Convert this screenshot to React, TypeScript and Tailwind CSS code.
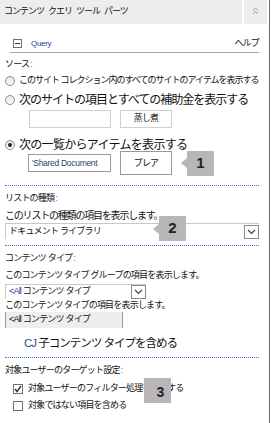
const FONT = "font-['Liberation_Sans','Noto_Sans_CJK_JP',sans-serif]";

const Radio = ({ checked = false }: { checked?: boolean }) => (
  <span className="w-[10px] h-[10px] rounded-full border border-[#8c8c8c] bg-gradient-to-b from-[#e6e6e6] to-white flex items-center justify-center shrink-0">
    {checked && <span className="w-[4px] h-[4px] rounded-full bg-[#222]" />}
  </span>
);

const Check = ({ checked = false }: { checked?: boolean }) => (
  <span className="w-[10px] h-[10px] border border-[#707070] bg-white flex items-center justify-center shrink-0">
    {checked && (
      <svg width="8" height="8" viewBox="0 0 8 8">
        <path d="M1 4 L3 6.5 L7 1" stroke="#333" strokeWidth="1.4" fill="none" />
      </svg>
    )}
  </span>
);

const Badge = ({ n, arrow = true }: { n: string; arrow?: boolean }) => (
  <div className="flex items-center">
    {arrow && (
      <div className="w-0 h-0 border-y-[5px] border-y-transparent border-r-[6px] border-r-[#b8b6b7]" />
    )}
    <div className="w-[27px] h-[25px] bg-[#b8b6b7] flex items-center justify-center text-[15px] font-bold text-[#222]">
      {n}
    </div>
  </div>
);

const Chevron = () => (
  <span className="w-[15px] h-[14px] border border-[#8a8a8a] bg-white flex items-center justify-center shrink-0">
    <svg width="9" height="6" viewBox="0 0 9 6">
      <path d="M1 1 L4.5 4.5 L8 1" stroke="#444" strokeWidth="1.2" fill="none" />
    </svg>
  </span>
);

const Dotted = ({ top = 6 }: { top?: number }) => (
  <div className={`border-t border-dotted border-[#3b73d6] mb-[6px] ${top === 10 ? "mt-[10px]" : "mt-[6px]"}`} />
);

const Colon = () => <span className="text-[#2f7fd0] ml-[1px]">:</span>;

export default function App() {
  return (
    <div className={`w-[272px] h-[423px] bg-white overflow-hidden text-[#111] ${FONT}`}>
      <div className="w-[270px] h-full border-r border-[#6f6f6f]">
        <div className="flex h-[24px]">
          <div className="flex-1 bg-[#ededed] flex items-center gap-[4px] pl-[4px] text-[9px] tracking-[-1px]">
            <span>コンテンツ</span>
            <span>クエリ</span>
            <span>ツール</span>
            <span>パーツ</span>
          </div>
          <div className="w-[23px] ml-[2px] mr-[2px] bg-[#ededed] flex justify-center pt-[7px]">
            <svg width="7" height="8" viewBox="0 0 7 8">
              <path d="M1 3.5 L3.5 1 L6 3.5 M1 7 L3.5 4.5 L6 7" stroke="#9a9a9a" strokeWidth="1" fill="none" />
            </svg>
          </div>
        </div>

        <div className="mx-[10px] mt-[11px] h-[18px] flex items-center border-b border-[#a6a6a6]">
          <span className="ml-[3px] w-[9px] h-[9px] border border-[#6f6f6f] flex items-center justify-center">
            <span className="w-[5px] h-px bg-[#333]" />
          </span>
          <span className="ml-[9px] text-[8px] text-[#1f3f8f] tracking-[-0.3px]">Query</span>
          <span className="ml-auto text-[9px] tracking-[-0.8px]">ヘルプ</span>
        </div>

        <div className="pl-[5px] pr-[10px]">
          <div className="mt-[5px] text-[9px] tracking-[-0.8px] h-[12px] leading-[12px]">
            ソース<Colon />
          </div>
          <div className="mt-[5px] flex items-center gap-[4px] h-[12px]">
            <Radio />
            <span className="text-[9px] tracking-[-1px] whitespace-nowrap">
              このサイト コレクション内のすべてのサイトのアイテムを表示する
            </span>
          </div>
          <div className="mt-[5px] flex items-center gap-[4px] h-[16px]">
            <Radio />
            <span className="text-[12px] tracking-[-1px] whitespace-nowrap">
              次のサイトの項目とすべての補助金を表示する
            </span>
          </div>
          <div className="mt-[2px] flex items-start gap-[9px] pl-[24px] h-[18px]">
            <div className="w-[82px] h-[18px] border border-[#cfcfcf] bg-white" />
            <div className="w-[52px] h-[18px] border border-[#cfcfcf] bg-white flex items-center justify-center text-[9px] tracking-[-0.8px]">
              蒸し煮
            </div>
          </div>
          <div className="mt-[9px] flex items-center gap-[4px] h-[16px]">
            <Radio checked />
            <span className="text-[12px] tracking-[-0.7px] whitespace-nowrap">次の一覧からアイテムを表示する</span>
          </div>
          <div className="mt-[-2px] flex items-center pl-[23px] h-[24px]">
            <div className="w-[83px] h-[18px] border border-[#9a9a9a] bg-white flex items-center px-[3px] text-[8.5px] text-[#2a3f6a] tracking-[-0.3px] overflow-hidden whitespace-nowrap">
              'Shared Document
            </div>
            <div className="ml-[9px] w-[52px] h-[24px] border border-[#9a9a9a] bg-white flex items-start justify-center pt-[5px] text-[9px] tracking-[-0.8px]">
              プレア
            </div>
            <div className="ml-[9px]">
              <Badge n="1" />
            </div>
          </div>
          <Dotted top={10} />
          <div className="text-[9px] tracking-[-0.8px] h-[12px] leading-[12px]">
            リストの種類<Colon />
          </div>
          <div className="relative mt-[5px]">
            <div className="text-[10px] tracking-[-1.2px] h-[13px] leading-[13px]">
              このリストの種類の項目を表示します。
            </div>
            <div className="mt-[1px] flex items-center h-[16px] border-l border-t border-[#c9c9c9]">
              <span className="pl-[3px] text-[9px] tracking-[-0.8px] flex-1">ドキュメント ライブラリ</span>
              <Chevron />
            </div>
            <div className="absolute left-[148px] top-[7px]">
              <Badge n="2" />
            </div>
          </div>
          <Dotted />
          <div className="text-[9px] tracking-[-0.8px] h-[12px] leading-[12px]">
            コンテンツ タイプ<Colon />
          </div>
          <div className="mt-[5px] text-[9px] tracking-[-0.8px] h-[12px] leading-[12px]">
            このコンテンツ タイプ グループの項目を表示します。
          </div>
          <div className="mt-[3px] flex items-center w-[141px] h-[15px] border-l border-t border-[#c9c9c9]">
            <span className="pl-[3px] text-[9px] tracking-[-0.8px] flex-1">
              <span className="text-[#1f3f8f]">&lt;All</span> コンテンツ タイプ
            </span>
            <Chevron />
          </div>
          <div className="mt-0 text-[9px] tracking-[-0.8px] h-[12px] leading-[12px]">
            このコンテンツ タイプの項目を表示します。
          </div>
          <div className="mt-[1px] flex items-center w-[118px] h-[16px] bg-[#eeeeee] border-l border-r border-[#9a9a9a]">
            <span className="pl-[3px] text-[9px] tracking-[-0.8px]">&lt;All コンテンツ タイプ</span>
          </div>
          <div className="mt-[7px] pl-[19px] text-[11.5px] tracking-[-1px] h-[16px] leading-[16px]">
            <span className="text-[#2a4f9a]">CJ</span> 子コンテンツ タイプを含める
          </div>
          <Dotted />
          <div className="text-[9px] tracking-[-0.8px] h-[12px] leading-[12px]">
            対象ユーザーのターゲット設定<Colon />
          </div>
          <div className="relative pt-[7px]">
            <div className="flex items-center gap-[5px] pl-[8px] h-[12px]">
              <Check checked />
              <span className="text-[9px] tracking-[-0.8px]">対象ユーザーのフィルター処理を適用する</span>
            </div>
            <div className="mt-[5px] flex items-center gap-[5px] pl-[8px] h-[12px]">
              <Check />
              <span className="text-[9px] tracking-[-0.8px]">対象ではない項目を含める</span>
            </div>
            <div className="absolute left-[139px] top-[2px] w-[27px] h-[25px] bg-[#b8b6b7] flex items-center justify-center text-[14px] font-bold text-[#222]">
              <span className="ml-[6px] mt-[3px]">3</span>
            </div>
          </div>
        </div>
      </div>
    </div>
  );
}
